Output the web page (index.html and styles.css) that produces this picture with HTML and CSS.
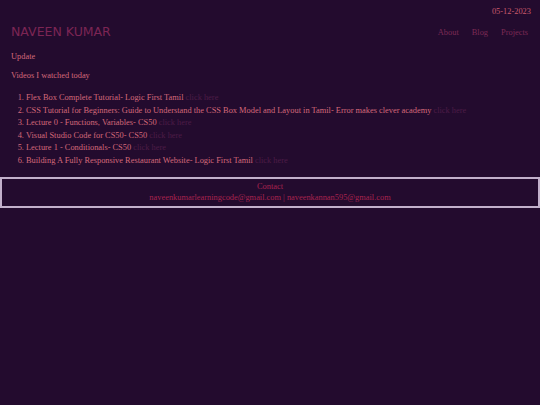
FILE: index.html
```html
<!DOCTYPE html>
<html>
<head>
<meta charset="utf-8">
<link rel="stylesheet" href="styles.css">
</head>
<body>
<div class="date">05-12-2023</div>
<header class="top">
  <h1 class="name">NAVEEN KUMAR</h1>
  <nav class="nav">
    <a href="#">About</a>
    <a href="#">Blog</a>
    <a href="#">Projects</a>
  </nav>
</header>
<main class="content">
  <p class="update">Update</p>
  <p class="lead">Videos I watched today</p>
  <ol class="videos">
    <li>Flex Box Complete Tutorial- Logic First Tamil <a href="#">click here</a></li>
    <li>CSS Tutorial for Beginners: Guide to Understand the CSS Box Model and Layout in Tamil- Error makes clever academy <a href="#">click here</a></li>
    <li>Lecture 0 - Functions, Variables- CS50 <a href="#">click here</a></li>
    <li>Visual Studio Code for CS50- CS50 <a href="#">click here</a></li>
    <li>Lecture 1 - Conditionals- CS50 <a href="#">click here</a></li>
    <li>Building A Fully Responsive Restaurant Website- Logic First Tamil <a href="#">click here</a></li>
  </ol>
</main>
<footer class="footer">
  <div>Contact</div>
  <div>naveenkumarlearningcode@gmail.com | naveenkannan595@gmail.com</div>
</footer>
</body>
</html>
```
FILE: styles.css
```css
html, body {
  margin: 0;
  padding: 0;
  background: #230b2e;
  height: 100%;
}
body {
  font-family: "Liberation Serif", "Times New Roman", serif;
  font-size: 8.4px;
  color: #d5697a;
}
.date {
  text-align: right;
  padding: 6px 9px 0 0;
  color: #c85a6c;
  line-height: 11px;
}
.top {
  display: flex;
  justify-content: space-between;
  align-items: center;
  padding: 7px 12px 0 11px;
}
.name {
  margin: 0;
  font-family: "DejaVu Sans", sans-serif;
  font-weight: normal;
  font-size: 12.5px;
  color: #7c2554;
  line-height: 16px;
}
.nav {
  display: flex;
  gap: 13px;
}
.nav a {
  color: #7c2a55;
  text-decoration: none;
}
.content {
  padding: 0 11px;
}
.update {
  margin: 11px 0 0;
  line-height: 12px;
}
.lead {
  margin: 7px 0 0;
  line-height: 12px;
}
.videos {
  margin: 10px 0 0;
  padding-left: 15px;
}
.videos li {
  line-height: 12.5px;
}
.videos a {
  color: #4d1c47;
  text-decoration: none;
}
.footer {
  margin-top: 10px;
  border: 2px solid #c2b0cb;
  text-align: center;
  color: #a8234f;
  padding: 3px 0 3px;
  line-height: 10.5px;
}
```
